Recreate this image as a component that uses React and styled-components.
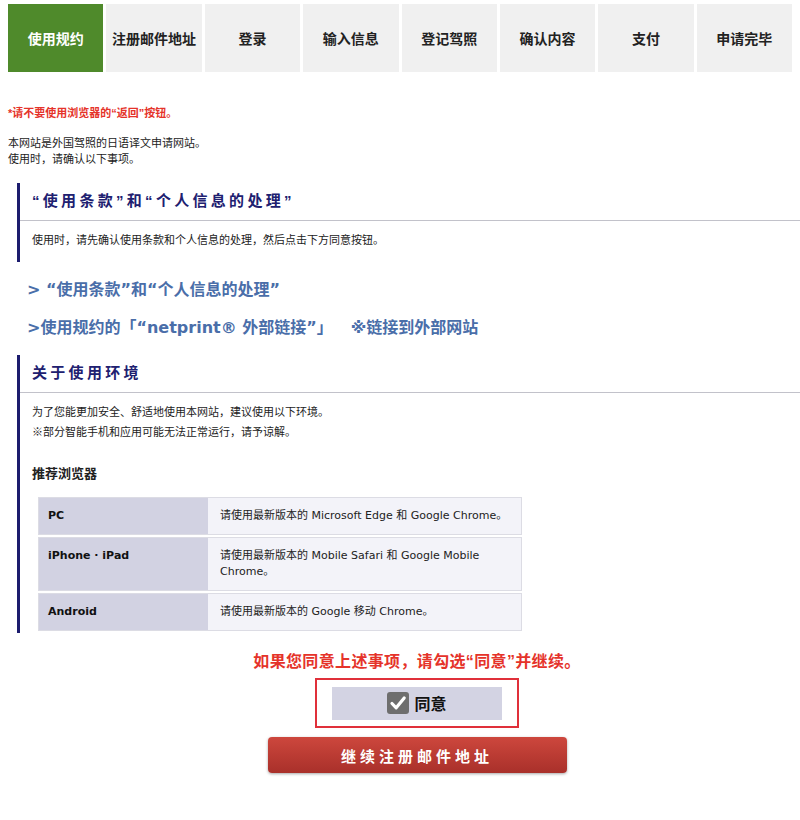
import React from 'react'
import styled, { createGlobalStyle } from 'styled-components'

const GlobalStyle = createGlobalStyle`
  html, body {
    margin: 0;
    padding: 0;
    background: #fff;
    overflow-x: hidden;
  }
  body {
    font-family: "Liberation Sans", "Noto Sans CJK SC", sans-serif;
    color: #222;
  }
`;

const steps = ['使用规约', '注册邮件地址', '登录', '输入信息', '登记驾照', '确认内容', '支付', '申请完毕'];

const browsers = [
  { name: 'PC', text: '请使用最新版本的 Microsoft Edge 和 Google Chrome。' },
  { name: 'iPhone · iPad', text: '请使用最新版本的 Mobile Safari 和 Google Mobile Chrome。' },
  { name: 'Android', text: '请使用最新版本的 Google 移动 Chrome。' },
];

const CheckIcon = () => (
  <svg width="22" height="22" viewBox="0 0 22 22">
    <rect x="0" y="0" width="22" height="22" rx="3" fill="#6e6e6e" />
    <path d="M5 11.5 L9.2 15.8 L17.2 6" fill="none" stroke="#fff" strokeWidth="3.2" strokeLinecap="round" strokeLinejoin="round" />
  </svg>
);

const App = () => {
  return (
    <Page>
      <GlobalStyle />
      <StepBar>
        {steps.map((s, i) => (
          <Step key={s} active={i === 0}>{s}</Step>
        ))}
      </StepBar>

      <Warning>*请不要使用浏览器的“返回”按钮。</Warning>
      <Intro>
        本网站是外国驾照的日语译文申请网站。<br />
        使用时，请确认以下事项。
      </Intro>

      <Section>
        <SectionTitle>“使用条款”和“个人信息的处理”</SectionTitle>
        <SectionBody>
          <p>使用时，请先确认使用条款和个人信息的处理，然后点击下方同意按钮。</p>
        </SectionBody>
      </Section>

      <Links>
        <LinkLine href="#">&gt; “使用条款”和“个人信息的处理”</LinkLine>
        <LinkLine href="#">&gt;使用规约的「“netprint® 外部链接”」<Ext>※链接到外部网站</Ext></LinkLine>
      </Links>

      <Section>
        <SectionTitle>关于使用环境</SectionTitle>
        <SectionBody flush>
          <p>
            为了您能更加安全、舒适地使用本网站，建议使用以下环境。<br />
            ※部分智能手机和应用可能无法正常运行，请予谅解。
          </p>
          <SubTitle>推荐浏览器</SubTitle>
          <BrowserTable>
            <tbody>
              {browsers.map(b => (
                <tr key={b.name}>
                  <NameCell>{b.name}</NameCell>
                  <TextCell>{b.text}</TextCell>
                </tr>
              ))}
            </tbody>
          </BrowserTable>
        </SectionBody>
      </Section>

      <Confirm>
        <ConfirmNote>如果您同意上述事项，请勾选“同意”并继续。</ConfirmNote>
        <AgreeFrame>
          <AgreeBox>
            <CheckIcon />
            <span>同意</span>
          </AgreeBox>
        </AgreeFrame>
        <NextButton>继续注册邮件地址</NextButton>
      </Confirm>
    </Page>
  )
}

const Page = styled.div`
  width: 800px;
  padding-top: 4px;
  padding-bottom: 40px;
`;

const StepBar = styled.div`
  display: flex;
  gap: 3px;
  padding: 0 8px;
`;

const Step = styled.div`
  flex: 1;
  height: 68px;
  display: flex;
  align-items: center;
  justify-content: center;
  font-family: "Noto Sans CJK SC", sans-serif;
  font-size: 14px;
  font-weight: 700;
  background: ${props => (props.active ? '#4f8a2b' : '#f0f0f0')};
  color: ${props => (props.active ? '#fff' : '#222')};
`;

const Warning = styled.p`
  margin: 33px 0 0 8px;
  font-size: 11px;
  line-height: 16px;
  font-weight: 700;
  color: #e5332a;
`;

const Intro = styled.p`
  margin: 14px 0 0 8px;
  font-size: 11px;
  line-height: 16px;
`;

const Section = styled.section`
  margin: 16px 0 0 17px;
  border-left: 3px solid #1c1c6e;
`;

const SectionTitle = styled.h2`
  margin: 0;
  padding: 8px 12px 9px;
  font-size: 15px;
  line-height: 20px;
  font-weight: 700;
  letter-spacing: 3.3px;
  color: #202070;
  border-bottom: 1px solid #c2c2ca;
`;

const SectionBody = styled.div`
  padding: 9px 12px ${props => (props.flush ? '0' : '12px')};
  font-size: 11px;
  line-height: 20px;

  p {
    margin: 0;
  }
`;

const SubTitle = styled.h3`
  margin: 22px 0 0;
  font-size: 13px;
  line-height: 20px;
  font-weight: 700;
`;

const BrowserTable = styled.table`
  margin: 11px 0 0 6px;
  width: 484px;
  border-collapse: separate;
  border-spacing: 0 2px;
  font-family: "DejaVu Sans", "Noto Sans CJK SC", sans-serif;
  font-size: 11px;
  line-height: 16px;

  td {
    border-top: 1px solid #dcdce4;
    border-bottom: 1px solid #dcdce4;
    vertical-align: top;
    padding-top: 10px;
    padding-bottom: 10px;
  }
`;

const NameCell = styled.td`
  width: 150px;
  padding-left: 9px;
  padding-right: 10px;
  background: #d2d2e2;
  font-weight: 700;
  color: #111;
  border-left: 1px solid #dcdce4;
`;

const TextCell = styled.td`
  padding-left: 12px;
  padding-right: 12px;
  background: #f3f3f9;
  border-right: 1px solid #dcdce4;
`;

const Links = styled.div`
  display: flex;
  flex-direction: column;
  gap: 16px;
  margin: 17px 0 0 27px;
`;

const LinkLine = styled.a`
  font-family: "DejaVu Sans", "Noto Sans CJK SC", sans-serif;
  font-size: 16px;
  line-height: 22px;
  font-weight: 700;
  color: #4a6ea9;
  text-decoration: none;
`;

const Ext = styled.span`
  margin-left: 18px;
`;

const Confirm = styled.div`
  display: flex;
  flex-direction: column;
  align-items: center;
  padding-left: 34px;
  width: 766px;
  margin-top: 18px;
`;

const ConfirmNote = styled.p`
  margin: 0;
  font-size: 16px;
  line-height: 22px;
  font-weight: 700;
  letter-spacing: 0.35px;
  color: #e5332a;
`;

const AgreeFrame = styled.div`
  margin-top: 5px;
  width: 200px;
  height: 46px;
  border: 2px solid #e0303a;
  display: flex;
  align-items: center;
  justify-content: center;
`;

const AgreeBox = styled.div`
  width: 170px;
  height: 33px;
  background: #d3d3e3;
  display: flex;
  align-items: center;
  justify-content: center;
  gap: 5px;
  font-family: "Noto Sans CJK SC", sans-serif;
  font-size: 16px;
  font-weight: 700;
  color: #111;
`;

const NextButton = styled.button`
  margin-top: 9px;
  width: 299px;
  height: 36px;
  border: none;
  border-radius: 4px;
  background: linear-gradient(#cd473d, #a9302a);
  box-shadow: 0 1px 3px rgba(0, 0, 0, 0.35);
  color: #fff;
  font-family: "Noto Sans CJK SC", sans-serif;
  font-size: 15px;
  font-weight: 700;
  letter-spacing: 4px;
  cursor: pointer;
`;

export default App;
